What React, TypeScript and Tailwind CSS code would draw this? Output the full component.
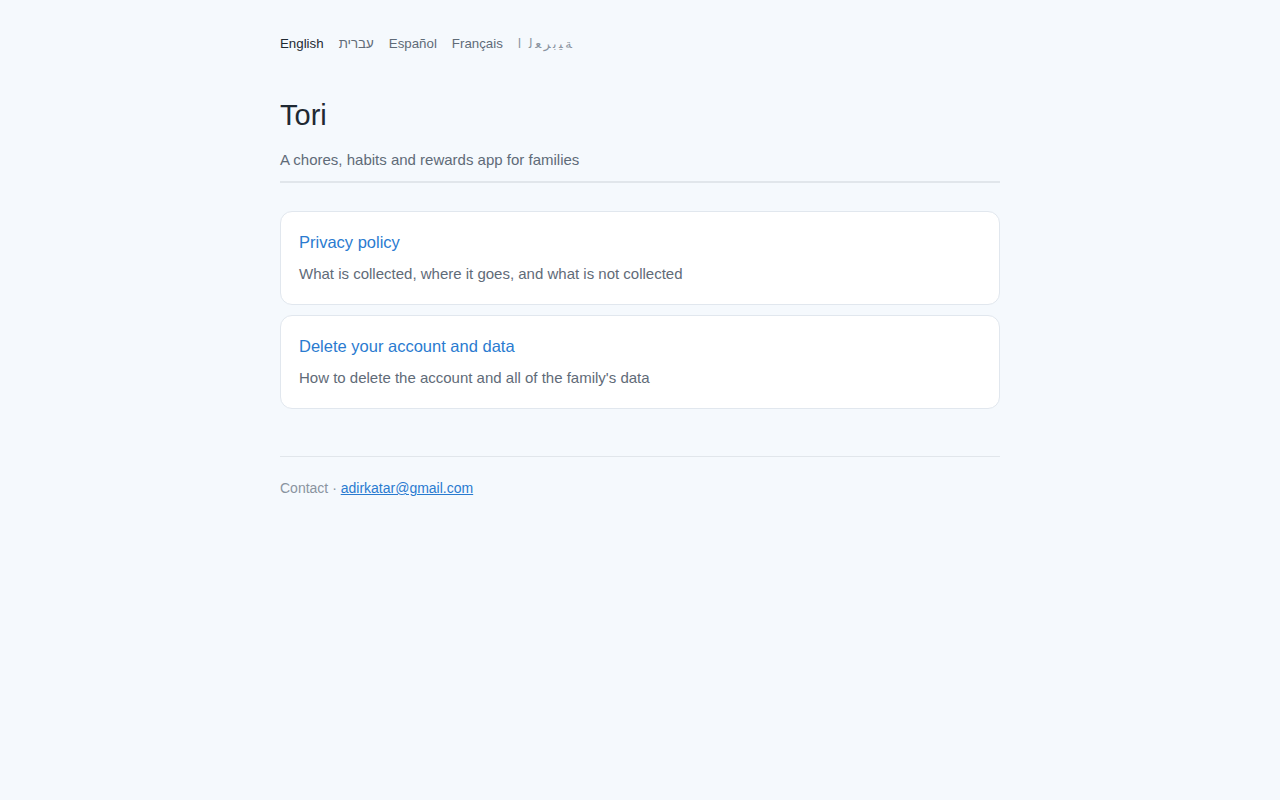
import React from "react";

const ZWJ = "\u200D";

// Arabic label as it appears in the screenshot: letters kept in their joined
// forms but laid out one by one, left to right, with a little air between.
const arabicLetters = [
  "ا",
  "ل" + ZWJ,
  ZWJ + "ع" + ZWJ,
  ZWJ + "ر",
  "ب" + ZWJ,
  ZWJ + "ي" + ZWJ,
  ZWJ + "ة",
];

const languages = [
  { label: "English", active: true },
  { label: "עברית" },
  { label: "Español" },
  { label: "Français" },
  { label: "العربية", spaced: true },
];

const links = [
  {
    title: "Privacy policy",
    description: "What is collected, where it goes, and what is not collected",
  },
  {
    title: "Delete your account and data",
    description: "How to delete the account and all of the family's data",
  },
];

export default function App() {
  return (
    <div
      className="min-h-[800px] bg-[#f5f9fd] text-[#1f2933]"
      style={{ fontFamily: '"Liberation Sans", Arial, sans-serif' }}
    >
      <div className="mx-auto w-[720px] pt-[35px]">
        <nav className="flex items-center gap-[15px] text-[13.3px] leading-[18px] text-[#5f6b78]">
          {languages.map((lang) =>
            lang.spaced ? (
              <a
                key={lang.label}
                href="#"
                dir="ltr"
                lang="ar"
                aria-label={lang.label}
                className="flex gap-[2.5px] font-['DejaVu_Sans',sans-serif] text-[12.5px] text-[#8a94a0]"
              >
                {arabicLetters.map((ch, i) => (
                  <span key={i} className={i === 0 ? "mr-[5px]" : ""}>
                    {ch}
                  </span>
                ))}
              </a>
            ) : (
              <a
                key={lang.label}
                href="#"
                className={lang.active ? "text-[#1f2933]" : "text-[#5f6b78]"}
              >
                {lang.label}
              </a>
            ),
          )}
        </nav>

        <header className="mt-[43px] border-b-2 border-[#e1e6eb] pb-[11px]">
          <h1 className="text-[29px] leading-[38px] font-normal text-[#1f2933]">
            Tori
          </h1>
          <p className="mt-[16px] text-[15px] leading-[20px] text-[#5f6b78]">
            A chores, habits and rewards app for families
          </p>
        </header>

        <div className="mt-[28px] flex flex-col gap-[10px]">
          {links.map((link) => (
            <a
              key={link.title}
              href="#"
              className="block rounded-[12px] border border-[#e1e7ee] bg-white px-[18px] pt-[19px] pb-[20px]"
            >
              <div className="text-[16.5px] leading-[22px] text-[#2a7bd0]">
                {link.title}
              </div>
              <div className="mt-[10px] text-[15px] leading-[21px] text-[#5f6b78]">
                {link.description}
              </div>
            </a>
          ))}
        </div>

        <footer className="mt-[47px] border-t border-[#e1e6eb] pt-[22px] text-[14px] leading-[18px] text-[#8a94a0]">
          Contact ·{" "}
          <a href="#" className="text-[#2a7bd0] underline">
            adirkatar@gmail.com
          </a>
        </footer>
      </div>
    </div>
  );
}
